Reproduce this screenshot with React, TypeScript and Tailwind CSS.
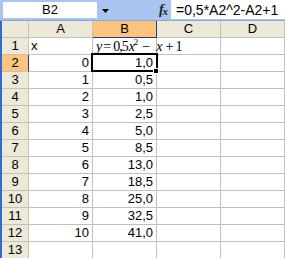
import React from "react";

const data: [string, string][] = [
  ["0", "1,0"],
  ["1", "0,5"],
  ["2", "1,0"],
  ["3", "2,5"],
  ["4", "5,0"],
  ["5", "8,5"],
  ["6", "13,0"],
  ["7", "18,5"],
  ["8", "25,0"],
  ["9", "32,5"],
  ["10", "41,0"],
];

const hdr = "h-[17px] bg-[#ece9d8] border-r border-b border-[#c5c2b2] flex items-center justify-center";
const cell = "h-[17px] border-r border-b border-[#c0c0c0] flex items-end leading-[16px]";

export default function App() {
  return (
    <div
      className="w-[285px] h-[258px] overflow-hidden bg-white text-black text-[13px]"
      style={{ fontFamily: '"Liberation Sans", Arial, sans-serif' }}
    >
      {/* formula bar */}
      <div className="h-[21px] bg-[#a9c4f0] border-b border-[#8aa6d6] flex items-start pl-[3px]">
        <div className="mt-[2px] w-[94px] h-[16px] bg-white flex items-center justify-center leading-[16px]">B2</div>
        <div className="w-[59px] h-[19px] flex items-center pl-[5px]">
          <svg width="7" height="4" viewBox="0 0 7 4" className="mt-[2px]">
            <polygon points="0,0 7,0 3.5,4" fill="#000" />
          </svg>
        </div>
        <div
          className="w-[15px] h-[19px] flex items-center justify-center italic font-bold text-[#222]"
          style={{ fontFamily: '"Liberation Serif", "Times New Roman", serif' }}
        >
          <span className="text-[14px] leading-none">f</span>
          <span className="text-[11px] leading-none mt-[3px] -ml-[1px]">x</span>
        </div>
        <div className="flex-1 h-[19px] bg-white flex items-center pl-[5px] text-[14px] leading-[16px]">=0,5*A2^2-A2+1</div>
      </div>

      <div className="flex">
        <div className="w-[3px] h-[237px] bg-[#3169d4]" />
        <div className="grid grid-cols-[27px_64px_64px_64px_64px]">
          {/* header row */}
          <div className={hdr} />
          <div className={hdr}>A</div>
          <div className="h-[17px] bg-[#fcc47e] border-r border-b border-[#2a3a7a] flex items-center justify-center">B</div>
          <div className={hdr}>C</div>
          <div className={hdr}>D</div>

          {/* row 1 */}
          <div className={hdr}>1</div>
          <div className={`${cell} pl-[2px]`}>x</div>
          <div className={`${cell} relative`}>
            <div
              className="absolute left-[3px] top-[1px] flex items-baseline whitespace-nowrap text-[14px] leading-[16px] z-10"
              style={{ fontFamily: '"Liberation Serif", "Times New Roman", serif' }}
            >
              <span className="italic">y</span>
              <span className="ml-[1px]">=</span>
              <span className="ml-[2px] tracking-[-1px]">0,5</span>
              <span className="italic ml-[1px]">x</span>
              <span className="text-[9px] relative -top-[6px] -ml-[1px]">2</span>
              <span className="ml-[4px]">−</span>
              <span className="italic ml-[6px]">x</span>
              <span className="ml-[3px]">+</span>
              <span className="ml-[2px]">1</span>
            </div>
          </div>
          <div className={cell} />
          <div className={cell} />

          {data.map(([a, b], i) => {
            const row = i + 2;
            const sel = row === 2;
            return (
              <React.Fragment key={row}>
                {sel ? (
                  <div className="h-[17px] bg-[#fcc47e] border-r border-b border-r-[#2a3a7a] border-b-[#c5c2b2] flex items-center justify-center">
                    {row}
                  </div>
                ) : (
                  <div className={hdr}>{row}</div>
                )}
                <div className={`${cell} justify-end pr-[3px]`}>{a}</div>
                <div className={`${cell} justify-end pr-[3px] relative`}>
                  {b}
                  {sel && (
                    <>
                      <div className="absolute -left-[2px] -top-[2px] -right-[2px] -bottom-[1px] border-2 border-black pointer-events-none" />
                      <div className="absolute -right-[3px] -bottom-[3px] w-[6px] h-[6px] bg-black border border-white z-10" />
                    </>
                  )}
                </div>
                <div className={cell} />
                <div className={cell} />
              </React.Fragment>
            );
          })}

          <div className={hdr}>13</div>
          <div className={cell} />
          <div className={cell} />
          <div className={cell} />
          <div className={cell} />
        </div>
      </div>
    </div>
  );
}
